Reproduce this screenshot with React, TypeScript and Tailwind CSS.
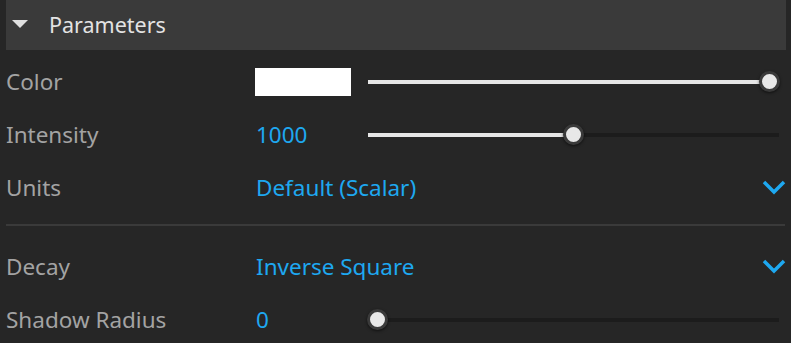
const font = { fontFamily: '"Noto Sans", "Open Sans", sans-serif' };

function Slider({ pct }: { pct: number }) {
  const pos = `calc(9px + (100% - 19px) * ${pct / 100})`;
  return (
    <div className="relative h-[22px] flex items-center flex-1 mr-[12px]">
      <div className="h-[4px] w-full bg-[#1c1c1c]" />
      <div className="absolute left-0 h-[4px] bg-[#e6e6e6]" style={{ width: pos }} />
      <div
        className="absolute w-[21px] h-[21px] -ml-[10px] rounded-full bg-[#e8e8e8] border-[3px] border-[#3a3a3a] shadow-[0_1px_3px_rgba(0,0,0,0.6)]"
        style={{ left: pos }}
      />
    </div>
  );
}

function Chevron() {
  return (
    <svg width="24" height="15" viewBox="0 0 24 15" className="mr-[5px]">
      <polyline points="2,2 12,12 22,2" fill="none" stroke="#1ea8f0" strokeWidth="3.5" />
    </svg>
  );
}

function Row({ label, children }: { label: string; children: React.ReactNode }) {
  return (
    <div className="h-[53px] flex items-center">
      <div className="w-[250px] pl-[6px] text-[22.5px] text-[#a3a3a3]">{label}</div>
      <div className="flex-1 flex items-center">{children}</div>
    </div>
  );
}

export default function App() {
  return (
    <div className="w-[791px] h-[343px] bg-[#262626] overflow-hidden" style={font}>
      <div className="ml-[6px] mr-[5px] h-[50px] bg-[#3a3a3a] flex items-center">
        <svg width="16" height="10" viewBox="0 0 16 10" className="ml-[6px] mr-[21px]">
          <polygon points="0,0 16,0 8,8" fill="#e0e0e0" />
        </svg>
        <span className="text-[21.5px] text-[#e3e3e3]">Parameters</span>
      </div>
      <div className="h-[5px]" />
      <Row label="Color">
        <div className="ml-[5px] w-[96px] h-[28px] bg-white" />
        <div className="ml-[17px] flex-1 flex">
          <Slider pct={100} />
        </div>
      </Row>
      <Row label="Intensity">
        <span className="ml-[6px] w-[112px] text-[22.5px] text-[#1ea8f0]">1000</span>
        <Slider pct={50} />
      </Row>
      <Row label="Units">
        <span className="ml-[6px] flex-1 text-[22.5px] text-[#1ea8f0]">Default (Scalar)</span>
        <Chevron />
      </Row>
      <div className="mx-[6px] mt-[10px] mb-[14px] h-[2px] bg-[#3a3a3a]" />
      <Row label="Decay">
        <span className="ml-[6px] flex-1 text-[22.5px] text-[#1ea8f0]">Inverse Square</span>
        <Chevron />
      </Row>
      <Row label="Shadow Radius">
        <span className="ml-[6px] w-[112px] text-[22.5px] text-[#1ea8f0]">0</span>
        <Slider pct={0} />
      </Row>
    </div>
  );
}
